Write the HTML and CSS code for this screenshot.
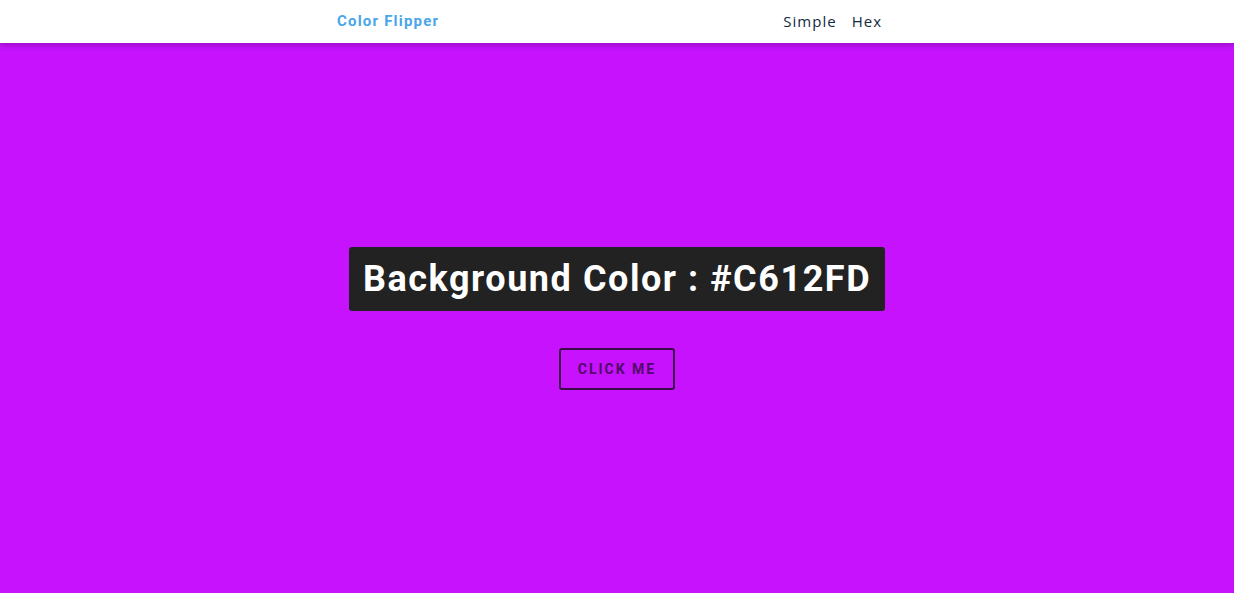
FILE: index.html
```html
<!DOCTYPE html>
<html lang="en">
<head>
<meta charset="utf-8">
<title>Color Flipper</title>
<link rel="stylesheet" href="styles.css">
</head>
<body>
<nav class="nav">
  <div class="nav-center">
    <h4 class="logo">Color Flipper</h4>
    <ul class="nav-links">
      <li><a href="#">Simple</a></li>
      <li><a href="#">Hex</a></li>
    </ul>
  </div>
</nav>
<main class="main">
  <div class="container">
    <h2 class="title">Background Color : <span class="color">#C612FD</span></h2>
    <button class="btn" type="button">click me</button>
  </div>
</main>
</body>
</html>
```
FILE: styles.css
```css
* { box-sizing: border-box; margin: 0; padding: 0; }
html, body { height: 100%; }
body {
  font-family: "Open Sans", sans-serif;
  background: #c612fd;
  display: flex;
  flex-direction: column;
}
.nav {
  height: 43px;
  background: #fff;
  box-shadow: 0 2px 6px rgba(0,0,0,0.25);
  display: flex;
  align-items: center;
  position: relative;
  z-index: 1;
}
.nav-center {
  width: 560px;
  padding-right: 15px;
  margin: 0 auto;
  display: flex;
  justify-content: space-between;
  align-items: center;
}
.logo {
  font-family: Roboto, sans-serif;
  font-size: 15px;
  font-weight: 700;
  letter-spacing: 1.2px;
  color: #49a6e9;
  margin-top: -2px;
}
.nav-links {
  list-style: none;
  display: flex;
  gap: 15px;
  margin-top: -1px;
}
.nav-links a {
  text-decoration: none;
  color: #102a42;
  font-size: 15px;
  font-weight: 500;
  letter-spacing: 1px;
}
.main {
  flex: 1;
  display: flex;
  align-items: center;
  justify-content: center;
}
.container {
  display: flex;
  flex-direction: column;
  align-items: center;
}
.title {
  font-family: Roboto, sans-serif;
  font-weight: 700;
  font-size: 36px;
  letter-spacing: 1.55px;
  line-height: 44px;
  background: #222;
  color: #fff;
  padding: 10px 14px;
  border-radius: 3px;
  margin-bottom: 37px;
}
.btn {
  font-family: Roboto, sans-serif;
  font-weight: 700;
  font-size: 14px;
  text-transform: uppercase;
  letter-spacing: 2px;
  background: transparent;
  color: #52096a;
  border: 2px solid #3a0a4a;
  border-radius: 3px;
  width: 116px;
  height: 42px;
}
```
